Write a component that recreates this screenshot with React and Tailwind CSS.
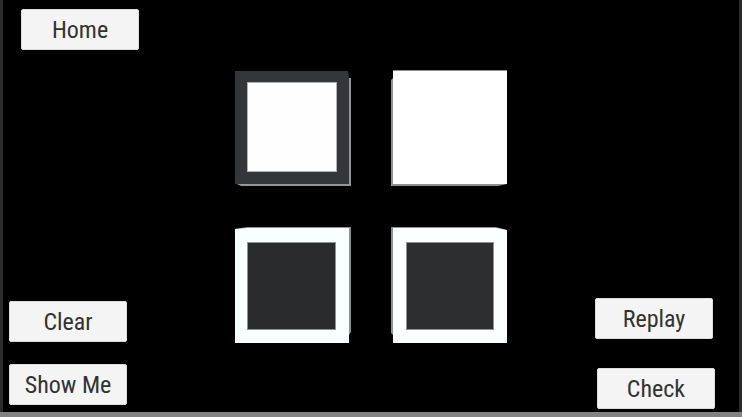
import { useState } from "react";

const TILES = [
  {
    id: 1,
    label: "Top left tile",
    edge: "M114 8 L116 8 L116 116 L6 116 L2 114 L114 114 Z",
    edgeColor: "#8e979c",
    face: "M0 1 H113 L114 8 V114 H0 Z",
    faceColor: "#33373a",
    inner: { x: 12, y: 12, width: 90, height: 90 },
    innerColor: "#fefefe",
    innerEdge: "#a9b3b5",
  },
  {
    id: 2,
    label: "Top right tile",
    edge: "M0 10 L2 8 V0 H116 V114 L107 116 H0 Z",
    edgeColor: "#8f8f92",
    face: "M2 1 H116 V114 H2 Z",
    faceColor: "#ffffff",
  },
  {
    id: 3,
    label: "Bottom left tile",
    edge: "M0 2 L12 0 H116 V105 L114 108 H100 Z",
    edgeColor: "#8a9094",
    face: "M0 2 L12 1 H114 V116 H0 Z",
    faceColor: "#f9ffff",
    inner: { x: 12, y: 15, width: 89, height: 88 },
    innerColor: "#292b2c",
    innerEdge: "#8c9294",
  },
  {
    id: 4,
    label: "Bottom right tile",
    edge: "M0 0 H105 L116 3 V20 L2 108 L0 106 Z",
    edgeColor: "#8a9094",
    face: "M2 1 H105 L116 3 V116 H2 Z",
    faceColor: "#fbffff",
    inner: { x: 15, y: 15, width: 88, height: 88 },
    innerColor: "#2c2f30",
    innerEdge: "#8c9294",
  },
];

const MenuButton = ({ children, className = "" }) => (
  <button
    type="button"
    className={`flex h-[41px] w-[118px] items-center justify-center rounded-[2px] border border-[#dcdcdc] bg-[#f4f4f4] font-['Roboto_Condensed','Open_Sans_Condensed','Liberation_Sans',sans-serif] text-[24px] leading-none whitespace-nowrap text-[#323232] ${className}`}
  >
    {children}
  </button>
);

const Tile = ({ tile, active, onSelect }) => (
  <button
    type="button"
    aria-label={tile.label}
    aria-pressed={active}
    onClick={onSelect}
    className="block"
  >
    <svg viewBox="0 0 116 116" className="size-[116px]">
      <path d={tile.edge} fill={tile.edgeColor} />
      <path d={tile.face} fill={tile.faceColor} />
      {tile.inner && (
        <>
          <rect {...tile.inner} fill={tile.innerEdge} />
          <rect
            x={tile.inner.x + 1}
            y={tile.inner.y + 1}
            width={tile.inner.width - 2}
            height={tile.inner.height - 2}
            fill={tile.innerColor}
          />
        </>
      )}
    </svg>
  </button>
);

const App = () => {
  const [selected, setSelected] = useState(null);

  return (
    <div className="flex min-h-screen border-b-[5px] border-[#828282] bg-black">
      <main className="grid flex-1 grid-cols-[1fr_auto_1fr] border-x-[3px] border-[#2b2b2b]">

        <nav className="flex flex-col items-start justify-between pt-[9px] pb-[7px] pl-[6px]">
          <MenuButton className="ml-3">Home</MenuButton>
          <div className="flex flex-col gap-[22px]">
            <MenuButton>Clear</MenuButton>
            <MenuButton>Show Me</MenuButton>
          </div>
        </nav>

        <section className="grid grid-cols-2 content-start gap-x-10 gap-y-[41px] pt-[70px]">
          {TILES.map((tile) => (
            <Tile
              key={tile.id}
              tile={tile}
              active={selected === tile.id}
              onSelect={() => setSelected(tile.id)}
            />
          ))}
        </section>

        <div className="flex flex-col items-end justify-end gap-[29px] pr-6 pb-[3px]">
          <MenuButton className="mr-[2px]">Replay</MenuButton>
          <MenuButton>Check</MenuButton>
        </div>

      </main>
    </div>
  );
};

export default App;
